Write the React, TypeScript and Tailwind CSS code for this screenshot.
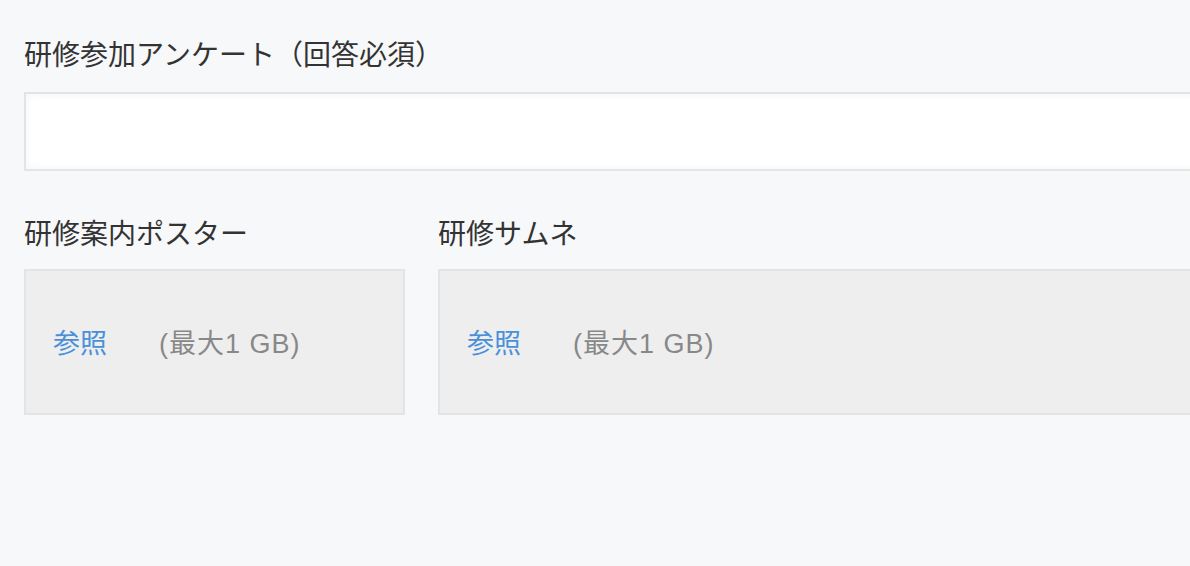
const font = "font-['Liberation_Sans','Noto_Sans_CJK_JP',sans-serif]";

function UploadBox({ className = "" }: { className?: string }) {
  return (
    <div
      className={`flex h-[146px] items-center border-2 border-[#e3e4e6] bg-[#eeeeee] pl-[27px] pt-1 text-[27px] ${className}`}
    >
      <span className="text-[#4a90d9]">参照</span>
      <span className="ml-[52px] tracking-[1px] text-[#888888]">(最大1 GB)</span>
    </div>
  );
}

export default function App() {
  return (
    <div className={`h-[566px] w-[1190px] overflow-hidden bg-[#f7f8fa] ${font}`}>
      <div className="w-[1260px] pl-6 pt-9">
        <label className="block h-10 text-[28px] leading-10 text-[#333333]">
          研修参加アンケート（回答必須）
        </label>
        <div className="mt-4 h-[79px] border-2 border-[#e3e4e6] bg-white shadow-[inset_0_0_8px_rgba(0,0,0,0.05)]" />
        <div className="mt-11 flex gap-[33px]">
          <div className="w-[381px] shrink-0">
            <label className="block h-10 text-[28px] leading-10 text-[#333333]">研修案内ポスター</label>
            <UploadBox className="mt-[14px]" />
          </div>
          <div className="flex-1">
            <label className="block h-10 text-[28px] leading-10 text-[#333333]">研修サムネ</label>
            <UploadBox className="mt-[14px]" />
          </div>
        </div>
      </div>
    </div>
  );
}
